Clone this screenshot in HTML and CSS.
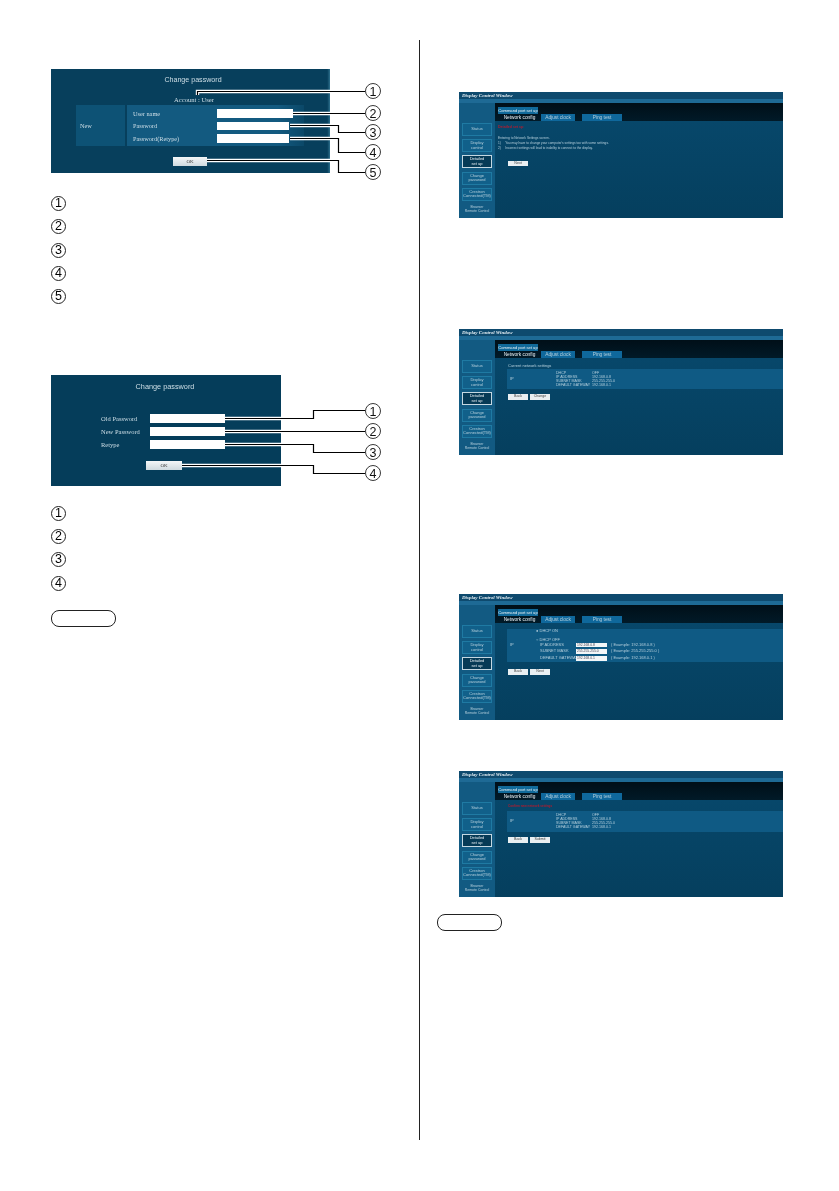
FILE: index.html
```html
<!DOCTYPE html>
<html lang="en">
<head>
    <meta charset="UTF-8">
    <meta name="viewport" content="width=device-width, initial-scale=1.0">
    <title>Change password and network settings</title>
    <link rel="stylesheet" href="styles.css">
</head>
<body>
    <div class="page">
        <div class="col-left">

            <div class="fig fig-a">
                <div class="panel panel-a">
                    <div class="panel-title">Change password</div>
                    <div class="account">Account : User</div>
                    <div class="new-table">
                        <div class="new-cell">New</div>
                        <div class="fields">
                            <div class="field-row"><span class="field-label">User name</span><span class="input input-wide"></span></div>
                            <div class="field-row"><span class="field-label">Password</span><span class="input"></span></div>
                            <div class="field-row"><span class="field-label">Password(Retype)</span><span class="input"></span></div>
                        </div>
                    </div>
                    <div class="ok">OK</div>
                </div>
                <svg class="leaders" viewBox="51 69 340 112" width="340" height="112">
                    <path class="halo" d="M197.5 95V91.5H365M293 113.5H365M290 125.5H338.5V132.5H365M290 138.5H338.5V152.5H365M207 160.5H338.5V172.5H365"/>
                    <path class="line" d="M197.5 95V91.5H365M293 113.5H365M290 125.5H338.5V132.5H365M290 138.5H338.5V152.5H365M207 160.5H338.5V172.5H365"/>
                    <circle cx="373" cy="91" r="7.5"/><text x="373" y="95.5">1</text>
                    <circle cx="373" cy="113" r="7.5"/><text x="373" y="117.5">2</text>
                    <circle cx="373" cy="132" r="7.5"/><text x="373" y="136.5">3</text>
                    <circle cx="373" cy="152" r="7.5"/><text x="373" y="156.5">4</text>
                    <circle cx="373" cy="172" r="7.5"/><text x="373" y="176.5">5</text>
                </svg>
            </div>

            <ul class="legend legend-a">
                <li><span class="num">1</span></li>
                <li><span class="num">2</span></li>
                <li><span class="num">3</span></li>
                <li><span class="num">4</span></li>
                <li><span class="num">5</span></li>
            </ul>

            <div class="fig fig-b">
                <div class="panel panel-b">
                    <div class="panel-title">Change password</div>
                    <div class="old-form">
                        <div class="field-row"><span class="field-label">Old Password</span><span class="input input-b"></span></div>
                        <div class="field-row"><span class="field-label">New Password</span><span class="input input-b"></span></div>
                        <div class="field-row"><span class="field-label">Retype</span><span class="input input-b"></span></div>
                    </div>
                    <div class="ok ok-b">OK</div>
                </div>
                <svg class="leaders" viewBox="51 374 340 112" width="340" height="112">
                    <path class="halo" d="M225 417.5H313.5V409.5H365M225 430.5H365M225 443.5H313.5V451.5H365M182 464.5H313.5V472.5H365"/>
                    <path class="line" d="M225 417.5H313.5V409.5H365M225 430.5H365M225 443.5H313.5V451.5H365M182 464.5H313.5V472.5H365"/>
                    <circle cx="373" cy="410" r="7.5"/><text x="373" y="414.5">1</text>
                    <circle cx="373" cy="430" r="7.5"/><text x="373" y="434.5">2</text>
                    <circle cx="373" cy="451" r="7.5"/><text x="373" y="455.5">3</text>
                    <circle cx="373" cy="472" r="7.5"/><text x="373" y="476.5">4</text>
                </svg>
            </div>

            <ul class="legend legend-b">
                <li><span class="num">1</span></li>
                <li><span class="num">2</span></li>
                <li><span class="num">3</span></li>
                <li><span class="num">4</span></li>
            </ul>

            <div class="note-pill note-left"></div>
        </div>

        <div class="col-right">

            <div class="screen screen-1">
                <div class="win-title">Display Control Window</div>
                <div class="win-stripe"></div>
                <div class="win-body">
                    <div class="side">
                        <div class="side-btn">Status</div>
                        <div class="side-btn">Display<br>control</div>
                        <div class="side-btn active">Detailed<br>set up</div>
                        <div class="side-btn">Change<br>password</div>
                        <div class="side-btn">Crestron<br>Connected(TM)</div>
                        <div class="side-text">Browser<br>Remote Control</div>
                    </div>
                    <div class="main">
                        <div class="win-head">
                            <div class="head-tab">Command port set up</div>
                            <div class="tabs">
                                <span class="tab current">Network config</span>
                                <span class="tab">Adjust clock</span>
                                <span class="tab tab-ping">Ping test</span>
                            </div>
                        </div>
                        <div class="content">
                            <div class="red">Detailed set up</div>
                            <div class="msg">
                                Entering to Network Settings screen.<br>
                                1)&nbsp;&nbsp;&nbsp;&nbsp;&nbsp;You may have to change your computer's settings too with some settings.<br>
                                2)&nbsp;&nbsp;&nbsp;&nbsp;&nbsp;Incorrect settings will lead to inability to connect to the display.
                            </div>
                            <div class="btns btns-next"><span class="btn">Next</span></div>
                        </div>
                    </div>
                </div>
            </div>

            <div class="screen screen-2">
                <div class="win-title">Display Control Window</div>
                <div class="win-stripe"></div>
                <div class="win-body">
                    <div class="side">
                        <div class="side-btn">Status</div>
                        <div class="side-btn">Display<br>control</div>
                        <div class="side-btn active">Detailed<br>set up</div>
                        <div class="side-btn">Change<br>password</div>
                        <div class="side-btn">Crestron<br>Connected(TM)</div>
                        <div class="side-text">Browser<br>Remote Control</div>
                    </div>
                    <div class="main">
                        <div class="win-head">
                            <div class="head-tab">Command port set up</div>
                            <div class="tabs">
                                <span class="tab current">Network config</span>
                                <span class="tab">Adjust clock</span>
                                <span class="tab tab-ping">Ping test</span>
                            </div>
                        </div>
                        <div class="content">
                            <div class="caption">Current network settings</div>
                            <div class="ip-table">
                                <div class="ip-name">IP</div>
                                <div class="ip-rows">
                                    <div class="ip-row"><span class="ip-key">DHCP</span><span>OFF</span></div>
                                    <div class="ip-row"><span class="ip-key">IP ADDRESS</span><span>192.168.0.8</span></div>
                                    <div class="ip-row"><span class="ip-key">SUBNET MASK</span><span>255.255.255.0</span></div>
                                    <div class="ip-row"><span class="ip-key">DEFAULT GATEWAY</span><span>192.168.0.1</span></div>
                                </div>
                            </div>
                            <div class="btns"><span class="btn">Back</span><span class="btn">Change</span></div>
                        </div>
                    </div>
                </div>
            </div>

            <div class="screen screen-3">
                <div class="win-title">Display Control Window</div>
                <div class="win-stripe"></div>
                <div class="win-body">
                    <div class="side">
                        <div class="side-btn">Status</div>
                        <div class="side-btn">Display<br>control</div>
                        <div class="side-btn active">Detailed<br>set up</div>
                        <div class="side-btn">Change<br>password</div>
                        <div class="side-btn">Crestron<br>Connected(TM)</div>
                        <div class="side-text">Browser<br>Remote Control</div>
                    </div>
                    <div class="main">
                        <div class="win-head">
                            <div class="head-tab">Command port set up</div>
                            <div class="tabs">
                                <span class="tab current">Network config</span>
                                <span class="tab">Adjust clock</span>
                                <span class="tab tab-ping">Ping test</span>
                            </div>
                        </div>
                        <div class="content">
                            <div class="ip-table ip-table-form">
                                <div class="ip-name ip-name-form">IP</div>
                                <div class="ip-form">
                                    <div class="dhcp">&#9679; DHCP ON</div>
                                    <div class="dhcp dhcp-off">&#9675; DHCP OFF</div>
                                    <div class="form-row"><span class="form-key">IP ADDRESS</span><span class="form-input">192.168.0.8</span><span>( Example: 192.168.0.8 )</span></div>
                                    <div class="form-row"><span class="form-key">SUBNET MASK</span><span class="form-input">255.255.255.0</span><span>( Example: 255.255.255.0 )</span></div>
                                    <div class="form-row"><span class="form-key">DEFAULT GATEWAY</span><span class="form-input">192.168.0.1</span><span>( Example: 192.168.0.1 )</span></div>
                                </div>
                            </div>
                            <div class="btns btns-form"><span class="btn">Back</span><span class="btn">Next</span></div>
                        </div>
                    </div>
                </div>
            </div>

            <div class="screen screen-4">
                <div class="win-title">Display Control Window</div>
                <div class="win-stripe"></div>
                <div class="win-body">
                    <div class="side">
                        <div class="side-btn">Status</div>
                        <div class="side-btn">Display<br>control</div>
                        <div class="side-btn active">Detailed<br>set up</div>
                        <div class="side-btn">Change<br>password</div>
                        <div class="side-btn">Crestron<br>Connected(TM)</div>
                        <div class="side-text">Browser<br>Remote Control</div>
                    </div>
                    <div class="main">
                        <div class="win-head">
                            <div class="head-tab">Command port set up</div>
                            <div class="tabs">
                                <span class="tab current">Network config</span>
                                <span class="tab">Adjust clock</span>
                                <span class="tab tab-ping">Ping test</span>
                            </div>
                        </div>
                        <div class="content">
                            <div class="red red-confirm">Confirm new network settings</div>
                            <div class="ip-table ip-table-confirm">
                                <div class="ip-name">IP</div>
                                <div class="ip-rows">
                                    <div class="ip-row"><span class="ip-key">DHCP</span><span>OFF</span></div>
                                    <div class="ip-row"><span class="ip-key">IP ADDRESS</span><span>192.168.0.8</span></div>
                                    <div class="ip-row"><span class="ip-key">SUBNET MASK</span><span>255.255.255.0</span></div>
                                    <div class="ip-row"><span class="ip-key">DEFAULT GATEWAY</span><span>192.168.0.1</span></div>
                                </div>
                            </div>
                            <div class="btns"><span class="btn">Back</span><span class="btn">Submit</span></div>
                        </div>
                    </div>
                </div>
            </div>

            <div class="note-pill note-right"></div>
        </div>
    </div>
</body>
</html>
```

FILE: styles.css
```css
* {
    box-sizing: border-box;
}

body {
    margin: 0;
    background-color: #fff;
    font-family: "Liberation Serif", serif;
    color: #000;
}

.page {
    display: flex;
    margin-top: 40px;
    height: 1100px;
}

.col-left {
    width: 420px;
    padding: 29px 0 0 51px;
    border-right: 1px solid #222;
}

.col-right {
    padding: 52px 0 0 39px;
}

/* figures on the left */
.fig {
    position: relative;
}

.leaders {
    position: absolute;
    top: 0;
    left: 0;
    filter: blur(0.2px);
}

.leaders .halo {
    fill: none;
    stroke: #fff;
    stroke-width: 3.4;
}

.leaders .line {
    fill: none;
    stroke: #000;
    stroke-width: 1.2;
}

.leaders circle {
    fill: #fff;
    stroke: #222;
    stroke-width: 0.9;
}

.leaders text {
    font-family: "Liberation Sans", Arial, sans-serif;
    font-size: 12.5px;
    text-anchor: middle;
    fill: #111;
}

.panel {
    background-color: #073f5c;
    color: #cfdfe7;
    filter: blur(0.4px);
    font-size: 6.3px;
}

.panel-a {
    width: 279px;
    height: 104px;
    padding-top: 7px;
    background: linear-gradient(90deg, #073f5c 0, #073f5c 99%, #2d6f8c 100%);
}

.panel-b {
    width: 230px;
    height: 111px;
    padding-top: 7px;
    background-color: #053d5a;
    font-size: 6.5px;
}

.panel-title {
    text-align: center;
    font-family: "Liberation Sans", sans-serif;
    font-size: 7.1px;
    line-height: 9px;
}

.panel-a .panel-title {
    padding-left: 5px;
}

.panel-b .panel-title {
    font-size: 7.3px;
    padding-right: 2px;
}

.account {
    margin-top: 11px;
    padding-left: 7px;
    text-align: center;
    font-size: 6.6px;
    line-height: 8px;
}

.new-table {
    display: flex;
    gap: 2px;
    width: 228px;
    height: 41px;
    margin: 1px 0 0 25px;
}

.new-cell {
    display: flex;
    align-items: center;
    width: 49px;
    padding-left: 4px;
    background-color: #0d5275;
}

.fields {
    flex: 1;
    display: flex;
    flex-direction: column;
    gap: 4px;
    padding: 4px 0 0 6px;
    background: linear-gradient(90deg, #135a80 0, #135a80 85%, #0b4868 100%);
}

.field-row {
    display: flex;
    align-items: center;
    height: 8.5px;
}

.field-label {
    width: 84px;
}

.input {
    display: block;
    width: 72px;
    height: 8.5px;
    background-color: #fff;
}

.input-wide {
    width: 76px;
}

.ok {
    width: 34px;
    height: 9px;
    margin: 11px 0 0 122px;
    background: linear-gradient(#f4f7f8, #cfdadf);
    color: #444;
    font-size: 5px;
    line-height: 9px;
    text-align: center;
}

.old-form {
    display: flex;
    flex-direction: column;
    gap: 4.5px;
    margin: 23px 0 0 50px;
}

.old-form .field-label {
    width: 49px;
    white-space: nowrap;
}

.input-b {
    width: 75px;
}

.ok-b {
    width: 36px;
    margin: 12px 0 0 95px;
}

.fig-b {
    margin-top: 71px;
}

.legend {
    display: flex;
    flex-direction: column;
    gap: 8.3px;
    margin: 0;
    padding: 0;
    list-style: none;
    filter: blur(0.2px);
}

.legend-a {
    margin-top: 23px;
}

.legend-b {
    margin-top: 19.5px;
}

.num {
    display: block;
    width: 15px;
    height: 15px;
    border: 1px solid #222;
    border-radius: 50%;
    font-family: "Liberation Sans", Arial, sans-serif;
    font-size: 12.5px;
    line-height: 13px;
    text-align: center;
}

.note-pill {
    width: 65px;
    height: 17px;
    border: 1px solid #222;
    border-radius: 8px;
}

.note-left {
    margin-top: 19.5px;
}

.note-right {
    margin: 17px 0 0 -22px;
}

/* browser screenshots on the right */
.screen {
    width: 324px;
    height: 126px;
    background-color: #064364;
    color: #b5cfdc;
    font-family: "Liberation Sans", sans-serif;
    font-size: 4px;
    line-height: 4.5px;
    overflow: hidden;
    filter: blur(0.6px);
}

.screen-2 {
    margin-top: 111px;
}

.screen-3 {
    margin-top: 139px;
}

.screen-4 {
    margin-top: 51px;
}

.win-title {
    height: 7px;
    padding-left: 3px;
    background-color: #0e4a6e;
    color: #e4eef3;
    font-family: "Liberation Serif", serif;
    font-style: italic;
    font-weight: bold;
    font-size: 5px;
    line-height: 7px;
}

.win-stripe {
    height: 4px;
    background-color: #1e6a95;
}

.win-body {
    display: flex;
    height: 115px;
}

.side {
    width: 36px;
    padding: 20px 3px 0;
    background-color: #125a82;
    display: flex;
    flex-direction: column;
    gap: 3.2px;
    text-align: center;
}

.side-btn {
    display: flex;
    align-items: center;
    justify-content: center;
    height: 13px;
    background-color: #11608a;
    border: 1px solid #1f7aa3;
    font-size: 4px;
    line-height: 4.5px;
    white-space: nowrap;
}

.side-btn.active {
    background-color: #063a56;
    border-color: #c5d8e2;
    color: #e8f0f4;
}

.side-text {
    margin-top: 1px;
    font-size: 3.5px;
    white-space: nowrap;
}

.main {
    flex: 1;
    display: flex;
    flex-direction: column;
}

.win-head {
    height: 18px;
    padding: 4px 0 0 3px;
    background: linear-gradient(#000f18, #011a28);
}

.head-tab {
    width: 40px;
    height: 7px;
    background-color: #116a9a;
    color: #eaf2f6;
    font-size: 4.1px;
    line-height: 7px;
    text-align: center;
    white-space: nowrap;
}

.tabs {
    display: flex;
}

.tab {
    width: 34px;
    height: 7px;
    background-color: #0f689c;
    font-size: 4.8px;
    line-height: 7px;
    text-align: center;
    white-space: nowrap;
}

.tab.current {
    width: 43px;
    background: transparent;
    color: #e8f0f4;
}

.tab-ping {
    width: 40px;
    margin-left: 7px;
}

.content {
    flex: 1;
    padding-left: 3px;
    background: linear-gradient(#07476a, #053f5e);
}

.red {
    padding-top: 4px;
    color: #b01c30;
    font-size: 3.6px;
    font-weight: bold;
    line-height: 5px;
}

.msg {
    margin-top: 6px;
    font-size: 3.2px;
    line-height: 4.8px;
    white-space: nowrap;
}

.btns {
    display: flex;
    gap: 2px;
    margin: 5px 0 0 10px;
}

.btns-next {
    margin-top: 10.5px;
}

.btn {
    display: block;
    width: 20px;
    height: 5.5px;
    background-color: #e9eff2;
    color: #444;
    font-size: 3.6px;
    line-height: 5.5px;
    text-align: center;
}

.caption {
    padding: 5px 0 0 10px;
    line-height: 5px;
}

.ip-table {
    display: flex;
    height: 20px;
    margin: 1px 0 0 9px;
    background-color: #0f5a84;
}

.ip-name {
    display: flex;
    align-items: center;
    width: 49px;
    padding-left: 3px;
}

.ip-rows {
    padding-top: 1.5px;
}

.ip-row {
    display: flex;
    font-size: 3.6px;
    line-height: 4.3px;
    white-space: nowrap;
}

.ip-key {
    width: 36px;
}

.ip-table-form {
    height: 33px;
    margin-top: 6px;
}

.ip-name-form {
    width: 29px;
}

.dhcp {
    height: 5px;
    white-space: nowrap;
}

.dhcp-off {
    margin-top: 3.5px;
    margin-bottom: -0.8px;
}

.form-row {
    display: flex;
    align-items: center;
    height: 6.6px;
    white-space: nowrap;
}

.form-key {
    width: 40px;
    padding-left: 4px;
}

.form-input {
    display: block;
    width: 31px;
    height: 4.8px;
    margin-right: 4px;
    background-color: #f2f6f8;
    color: #445;
    font-size: 3.4px;
    line-height: 4.8px;
    padding-left: 1px;
}

.btns-form {
    margin-top: 7px;
}

.red-confirm {
    padding: 4px 0 0 10px;
    font-size: 3.1px;
}

.ip-table-confirm {
    height: 21px;
    margin-top: 2px;
}
```
